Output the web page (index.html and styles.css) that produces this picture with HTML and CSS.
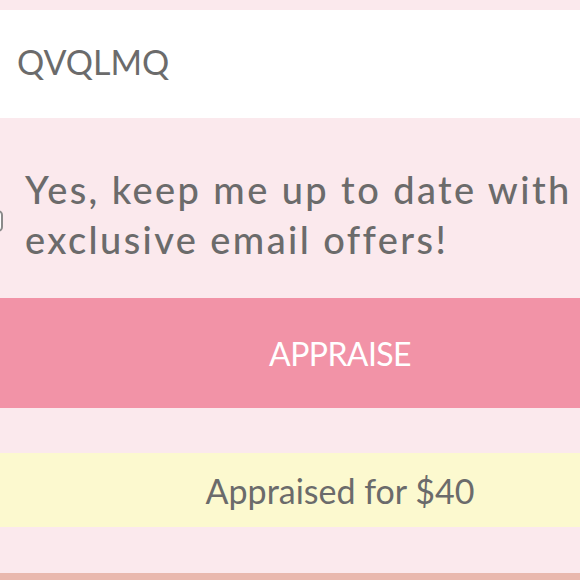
FILE: index.html
```html
<!DOCTYPE html>
<html lang="en">
<head>
    <meta charset="UTF-8">
    <meta name="viewport" content="width=device-width, initial-scale=1.0">
    <title>Appraise</title>
    <link rel="stylesheet" href="styles.css">
</head>
<body>

    <div class="page">
        <!-- Code field -->
        <div class="code-field">QVQLMQ</div>

        <!-- Email opt-in -->
        <label class="optin">
            <span class="check"></span>
            <span class="optin-text">Yes, keep me up to date with exclusive email offers!</span>
        </label>

        <button class="appraise-btn">APPRAISE</button>

        <div class="result">Appraised for $40</div>

        <div class="footer-strip"></div>
    </div>

</body>
</html>
```

FILE: styles.css
```css
* {
    margin: 0;
    padding: 0;
    box-sizing: border-box;
    font-family: Lato, "Open Sans", sans-serif;
}
body {
    background-color: #fbe9ed;
    overflow: hidden;
}
.page {
    padding-top: 10px;
}
.code-field {
    height: 108px;
    background: white;
    display: flex;
    align-items: center;
    padding-left: 17px;
    padding-bottom: 6px;
    font-size: 34px;
    color: #6b6b6b;
}
.optin {
    display: flex;
    align-items: center;
    height: 180px;
    padding-top: 12px;
    overflow: hidden;
}
.check {
    flex: none;
    width: 22px;
    height: 22px;
    margin-left: -19px;
    margin-right: 22px;
    margin-top: 14px;
    border: 2px solid #8a8a8a;
    border-radius: 5px;
    background: white;
}
.optin-text {
    width: 560px;
    font-size: 38px;
    line-height: 50px;
    letter-spacing: 2.4px;
    color: #6b6b6b;
    font-weight: 500;
}
.appraise-btn {
    display: block;
    width: 100%;
    height: 110px;
    border: none;
    padding-left: 100px;
    background: #f293a7;
    color: white;
    font-size: 32px;
    letter-spacing: -0.6px;
    text-align: center;
}
.result {
    margin-top: 45px;
    height: 74px;
    padding-left: 100px;
    background: #fcf9cf;
    display: flex;
    align-items: center;
    justify-content: center;
    font-size: 34px;
    color: #6b6b6b;
}
.footer-strip {
    margin-top: 46px;
    height: 20px;
    background: #e9b8ae;
}
```
